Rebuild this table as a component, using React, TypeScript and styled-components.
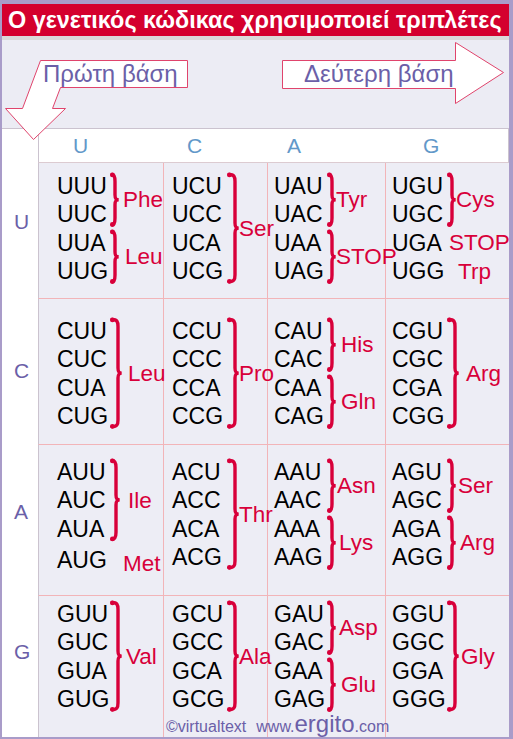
import React from 'react';
import styled, { createGlobalStyle } from 'styled-components';

const PURPLE = '#6b5fa8';
const RED = '#d8003a';
const LINE = '#f2b4b8';
const GREY = '#cbc3cf';
const LINE_H = 28.4;

const GlobalStyle = createGlobalStyle`
  html, body { margin: 0; padding: 0; }
  body {
    background: #a99cc9;
    font-family: "Liberation Sans", Arial, sans-serif;
  }
`;

const Frame = styled.div`
  width: 513px;
  height: 739px;
  box-sizing: border-box;
  padding: 4px 4px 2px 2px;
  background: #a99cc9;
  display: flex;
  flex-direction: column;
  overflow: hidden;
`;

const TitleBar = styled.h1`
  flex: none;
  margin: 0;
  height: 32px;
  padding-left: 6px;
  background: #d4002e;
  border-bottom: 4px solid #dadada;
  color: #fff;
  font: bold 23.4px/32px "Liberation Sans", Arial, sans-serif;
  white-space: nowrap;
  overflow: hidden;
`;

const HeaderZone = styled.div`
  flex: none;
  height: 88px;
  box-sizing: border-box;
  padding: 20px 6px 0 38px;
  background: #ececf4;
  display: flex;
  justify-content: space-between;
  align-items: flex-start;
  position: relative;
  z-index: 2;
`;

const ArrowBox = styled.div<{ $w: number; $pl: number }>`
  position: relative;
  z-index: 0;
  width: ${p => p.$w}px;
  height: 28px;
  box-sizing: border-box;
  padding-left: ${p => p.$pl}px;
  color: ${PURPLE};
  font-size: 24px;
  line-height: 28px;
  white-space: nowrap;

  svg {
    position: absolute;
    z-index: -1;
    overflow: visible;
  }
`;

const Table = styled.div`
  flex: none;
  display: grid;
  grid-template-columns: 36px 125px 104px 118px 124px;
  grid-template-rows: 35px 135px 146px 151px 142px;
  background: #ededf5;
`;

const Corner = styled.div`
  grid-row: 1;
  grid-column: 1;
  background: #fff;
  border-top: 1px solid ${GREY};
`;

const HeadCell = styled.div<{ $col: number; $pl: number }>`
  grid-row: 1;
  grid-column: ${p => p.$col};
  background: #fff;
  border-top: 1px solid ${GREY};
  border-bottom: 1px solid #dccbd1;
  border-left: ${p => (p.$col === 2 ? `1px solid ${GREY}` : 'none')};
  border-right: ${p => (p.$col === 5 ? `1px solid ${GREY}` : 'none')};
  padding-left: ${p => p.$pl}px;
  color: #6298c9;
  font-size: 21px;
  line-height: 33px;
`;

const RowLabel = styled.div<{ $row: number; $pt: number }>`
  grid-row: ${p => p.$row};
  grid-column: 1;
  background: #fff;
  padding: ${p => p.$pt}px 0 0 12px;
  color: ${PURPLE};
  font-size: 21px;
  line-height: 21px;
`;

const Cell = styled.div<{ $row: number; $col: number; $pt: number; $pl: number }>`
  grid-row: ${p => p.$row};
  grid-column: ${p => p.$col};
  border-top: ${p => (p.$row > 2 ? `1px solid ${LINE}` : 'none')};
  border-left: 1px solid ${p => (p.$col === 2 ? GREY : LINE)};
  padding: ${p => p.$pt}px 0 0 ${p => p.$pl}px;
  display: flex;
  flex-direction: column;
  min-width: 0;
`;

const Group = styled.div`
  display: flex;
  align-items: center;
`;

const Codons = styled.div`
  width: 50px;
  flex: none;
  color: #000;
  font-size: 23px;
  line-height: ${LINE_H}px;
`;

const Amino = styled.span<{ $m: number; $dy: number }>`
  position: relative;
  z-index: 1;
  margin-left: ${p => p.$m}px;
  padding-top: ${p => p.$dy * 2}px;
  color: ${RED};
  font-size: 22.5px;
  white-space: nowrap;
`;

const Footer = styled.div`
  grid-row: 5;
  grid-column: 2 / 6;
  align-self: end;
  padding: 0 0 1px 128px;
  display: flex;
  align-items: baseline;
  color: ${PURPLE};
  font-size: 16px;
  line-height: 1;
  position: relative;
  z-index: 1;
`;

const Big = styled.span`
  font-size: 24px;
`;

function Brace({ n, m }: { n: number; m: number }) {
  const w = n === 2 ? 9 : n === 3 ? 10 : 12;
  const h = n * LINE_H;
  const y0 = 2.5;
  const y1 = (n - 1) * LINE_H + 24.5;
  const ym = (y0 + y1) / 2;
  const x0 = 2;
  const xc = w - 4;
  const xp = w - 0.3;
  const d = `M${x0} ${y0} C${xc - 1} ${y0} ${xc} ${y0 + 2} ${xc} ${y0 + 7} L${xc} ${ym - 5} C${xc} ${ym - 1} ${xc + 1} ${ym} ${xp} ${ym} C${xc + 1} ${ym} ${xc} ${ym + 1} ${xc} ${ym + 5} L${xc} ${y1 - 7} C${xc} ${y1 - 2} ${xc - 1} ${y1} ${x0} ${y1}`;
  return (
    <svg width={w} height={h} style={{ marginLeft: m, flex: 'none' }}>
      <path d={d} fill="none" stroke={RED} strokeWidth={3.4} strokeLinecap="round" />
      <circle cx={x0 + 0.4} cy={y0 + 0.4} r={2.4} fill={RED} />
      <circle cx={x0 + 0.4} cy={y1 - 0.4} r={2.4} fill={RED} />
    </svg>
  );
}

type G = { c: string[]; aa: string; m: number; brace?: boolean; dy?: number };

const quad = (p: string) => ['U', 'C', 'A', 'G'].map(x => p + x);

const rows: { base: string; pt: number; lt: number; cells: G[][] }[] = [
  {
    base: 'U', pt: 9, lt: 48,
    cells: [
      [{ c: ['UUU', 'UUC'], aa: 'Phe', m: 4 }, { c: ['UUA', 'UUG'], aa: 'Leu', m: 6 }],
      [{ c: quad('UC'), aa: 'Ser', m: 0 }],
      [{ c: ['UAU', 'UAC'], aa: 'Tyr', m: 0 }, { c: ['UAA', 'UAG'], aa: 'STOP', m: 0 }],
      [
        { c: ['UGU', 'UGC'], aa: 'Cys', m: 0 },
        { c: ['UGA'], aa: 'STOP', m: 7, brace: false },
        { c: ['UGG'], aa: 'Trp', m: 16, brace: false, dy: 1 },
      ],
    ],
  },
  {
    base: 'C', pt: 18, lt: 62,
    cells: [
      [{ c: quad('CU'), aa: 'Leu', m: 6 }],
      [{ c: quad('CC'), aa: 'Pro', m: 0 }],
      [{ c: ['CAU', 'CAC'], aa: 'His', m: 5 }, { c: ['CAA', 'CAG'], aa: 'Gln', m: 5 }],
      [{ c: quad('CG'), aa: 'Arg', m: 7 }],
    ],
  },
  {
    base: 'A', pt: 13, lt: 57,
    cells: [
      [{ c: ['AUU', 'AUC', 'AUA'], aa: 'Ile', m: 8 }, { c: ['AUG'], aa: 'Met', m: 16, brace: false, dy: 4 }],
      [{ c: quad('AC'), aa: 'Thr', m: 0 }],
      [{ c: ['AAU', 'AAC'], aa: 'Asn', m: 1 }, { c: ['AAA', 'AAG'], aa: 'Lys', m: 3 }],
      [{ c: ['AGU', 'AGC'], aa: 'Ser', m: 2 }, { c: ['AGA', 'AGG'], aa: 'Arg', m: 4 }],
    ],
  },
  {
    base: 'G', pt: 4, lt: 46,
    cells: [
      [{ c: quad('GU'), aa: 'Val', m: 4 }],
      [{ c: quad('GC'), aa: 'Ala', m: 0 }],
      [{ c: ['GAU', 'GAC'], aa: 'Asp', m: 3 }, { c: ['GAA', 'GAG'], aa: 'Glu', m: 5 }],
      [{ c: quad('GG'), aa: 'Gly', m: 2 }],
    ],
  },
];

const colPad = [18, 8, 6, 6];
const braceGap = [3, 5, 3, 5];
const headPad = [34, 24, 20, 38];

export default function App() {
  return (
    <>
      <GlobalStyle />
      <Frame>
        <TitleBar>Ο γενετικός κώδικας χρησιμοποιεί τριπλέτες</TitleBar>
        <HeaderZone>
          <ArrowBox $w={147} $pl={3}>
            <svg width={184} height={81} style={{ left: -35, top: 0 }}>
              <polygon
                points="35.5,0.5 182.5,0.5 182.5,27.5 55.5,27.5 47.5,48.5 60.5,48.5 28.5,79.5 0.5,48.5 17.5,48.5"
                fill="#fff"
                stroke="#e0446c"
              />
            </svg>
            Πρώτη βάση
          </ArrowBox>
          <ArrowBox $w={221} $pl={22}>
            <svg width={222} height={63} style={{ left: 0, top: -18 }}>
              <polygon
                points="0.5,18.5 173.5,18.5 173.5,0.5 221.5,30.5 173.5,61.5 173.5,46.5 0.5,46.5"
                fill="#fff"
                stroke="#e0446c"
              />
            </svg>
            Δεύτερη βάση
          </ArrowBox>
        </HeaderZone>
        <Table>
          <Corner />
          {['U', 'C', 'A', 'G'].map((b, i) => (
            <HeadCell key={b} $col={i + 2} $pl={headPad[i]}>
              {b}
            </HeadCell>
          ))}
          {rows.map((r, ri) => (
            <React.Fragment key={r.base}>
              <RowLabel $row={ri + 2} $pt={r.lt}>
                {r.base}
              </RowLabel>
              {r.cells.map((groups, ci) => (
                <Cell key={ci} $row={ri + 2} $col={ci + 2} $pt={r.pt} $pl={colPad[ci]}>
                  {groups.map(g => (
                    <Group key={g.c[0]}>
                      <Codons>
                        {g.c.map(c => (
                          <div key={c}>{c}</div>
                        ))}
                      </Codons>
                      {g.brace !== false && <Brace n={g.c.length} m={braceGap[ci]} />}
                      <Amino $m={g.m} $dy={g.dy ?? 0}>
                        {g.aa}
                      </Amino>
                    </Group>
                  ))}
                </Cell>
              ))}
            </React.Fragment>
          ))}
          <Footer>
            ©virtualtext<span style={{ marginLeft: 10 }}>www.</span>
            <Big>ergito</Big>.com
          </Footer>
        </Table>
      </Frame>
    </>
  );
}
